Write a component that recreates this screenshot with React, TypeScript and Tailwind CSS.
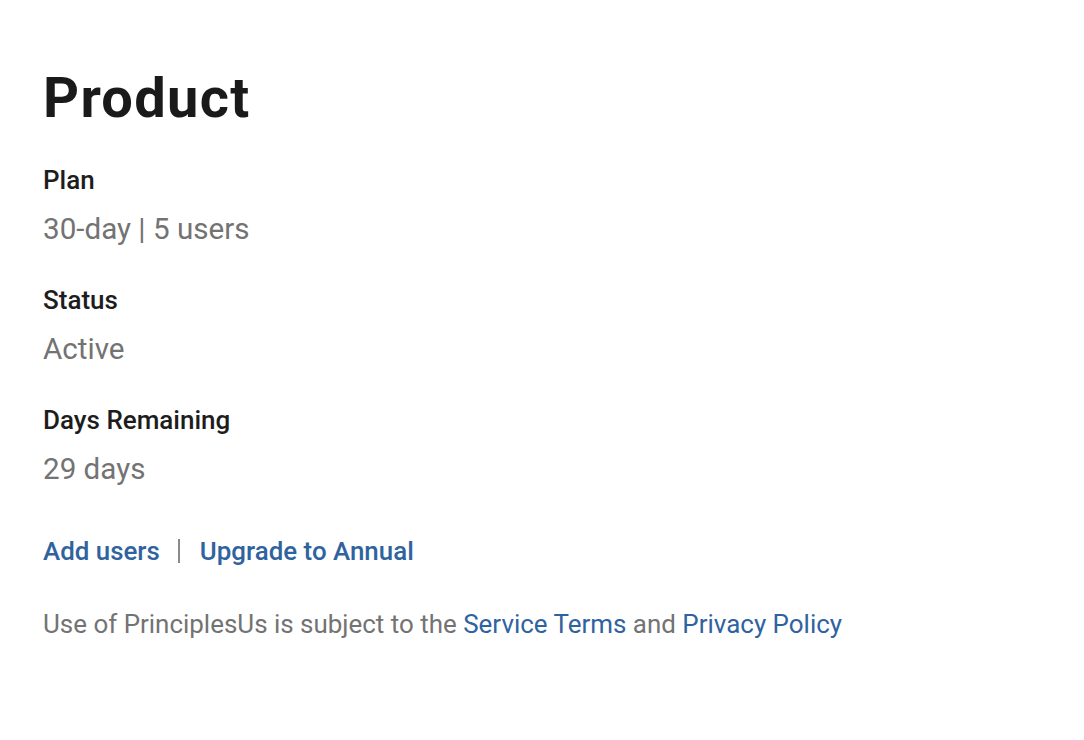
import React from "react";

function Field({ label, value }: { label: string; value: string }) {
  return (
    <div className="flex flex-col">
      <div className="text-[26px] leading-[32px] font-medium text-[#1d1d1d]">{label}</div>
      <div className="mt-[15px] text-[29.6px] leading-[36px] text-[#737373]">{value}</div>
    </div>
  );
}

export default function App() {
  return (
    <div
      className="min-h-[740px] w-full bg-white pl-[43px] pt-[66px]"
      style={{ fontFamily: "Roboto, 'Liberation Sans', sans-serif" }}
    >
      <h1 className="text-[56px] leading-[64px] font-bold text-[#1a1a1a] tracking-[1.3px]">Product</h1>
      <div className="mt-[34px] flex flex-col gap-[37px]">
        <Field label="Plan" value="30-day | 5 users" />
        <Field label="Status" value="Active" />
        <Field label="Days Remaining" value="29 days" />
      </div>
      <div className="mt-[48px] flex items-center text-[25.9px] leading-[32px] font-medium text-[#2f63a0]">
        <span>Add users</span>
        <span className="ml-[18px] mr-[20px] h-[24px] w-[2px] bg-[#8a8a8a]" />
        <span>Upgrade to Annual</span>
      </div>
      <div className="mt-[40px] text-[25.95px] leading-[34px] text-[#737373]">
        Use of PrinciplesUs is subject to the <span className="text-[#2f63a0]">Service Terms</span> and{" "}
        <span className="text-[#2f63a0]">Privacy Policy</span>
      </div>
    </div>
  );
}
